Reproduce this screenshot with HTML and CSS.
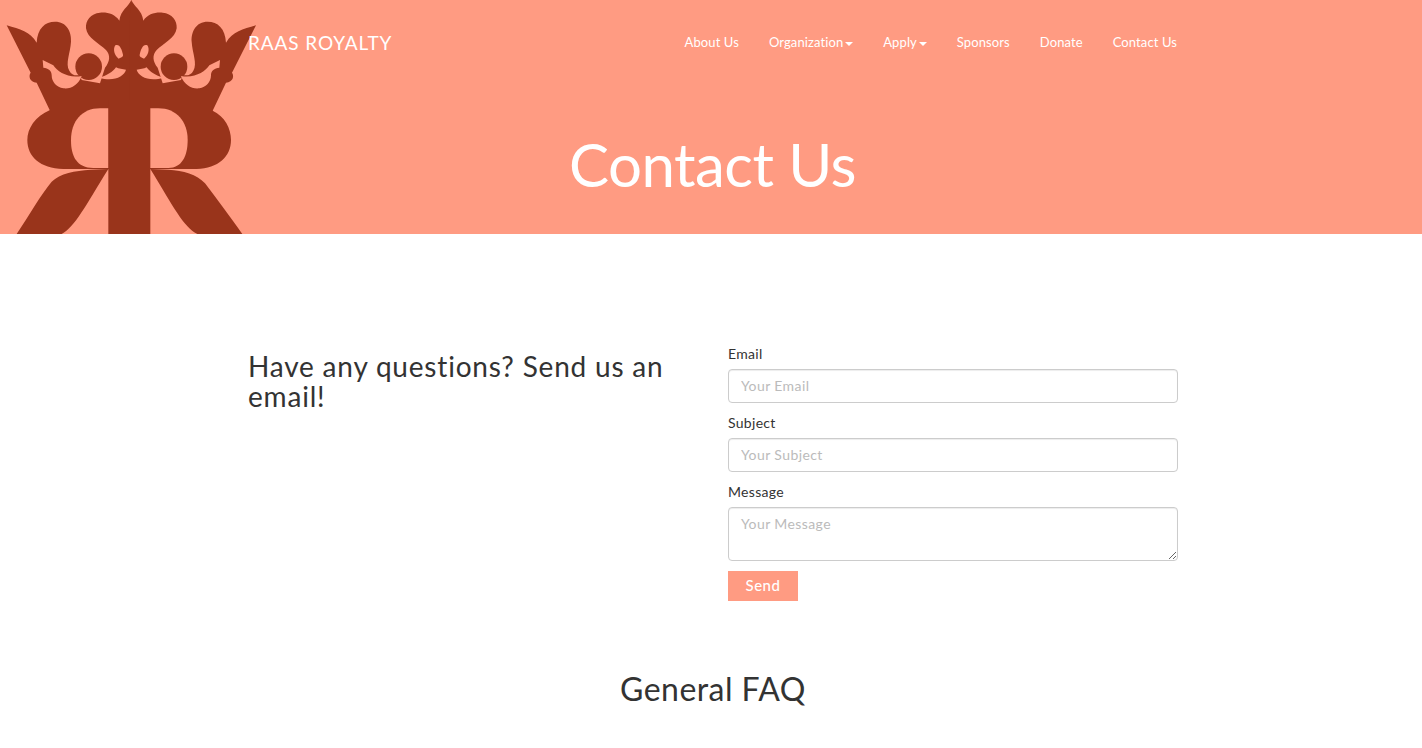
FILE: index.html
```html
<!DOCTYPE html>
<html lang="en">
<head>
    <meta charset="UTF-8">
    <meta name="viewport" content="width=device-width, initial-scale=1.0">
    <title>Contact Us - Raas Royalty</title>
    <link rel="stylesheet" href="styles.css">
</head>
<body>
    <header class="hero">
        <svg class="logo" viewBox="0 0 780 702" aria-hidden="true">
            <defs>
                <g id="crownHalf">
                    <path d="M394 0C386 20 362 30 358 62C345 42 322 36 300 38C272 40 256 62 258 85C262 115 298 130 318 150C332 165 330 185 315 203L300 250L245 240L240 225C225 228 215 225 208 212C195 190 211 160 213 125C215 95 200 65 165 65C135 65 112 85 110 128C90 95 60 88 20 76L92 218C85 228 88 245 110 248L150 332L150 345L400 345L400 60Z"/>
                    <circle cx="266" cy="200" r="40"/>
                    <path class="cut" d="M128 180L160 196C172 215 205 236 245 228C235 255 212 268 190 265C170 262 155 246 155 226C155 212 145 205 130 203Z"/>
                    <path class="cut" d="M298 233C322 226 338 216 348 202C356 206 368 208 378 209C372 230 340 246 298 233Z"/>
                    <path class="cut" d="M346 136C338 148 343 166 356 176C362 172 370 172 369 164C366 148 358 130 346 136Z"/>
                </g>
            </defs>
            <!-- R bowls go under the crown so the joins don't show -->
            <path d="M150 330C105 350 82 385 82 420C82 470 120 505 190 507L590 507C655 505 693 470 693 420C693 385 675 350 638 332L620 300L170 300Z"/>
            <use href="#crownHalf"/>
            <use href="#crownHalf" transform="matrix(-1 0 0 1 788 0)"/>
            <path class="cut" d="M326 325L300 325C245 325 213 365 213 420C213 470 230 503 280 504L326 504Z"/>
            <path class="cut" d="M450 325L475 325C530 325 563 365 563 420C563 470 545 503 505 504L450 504Z"/>
            <rect x="325" y="300" width="126" height="402"/>
            <path d="M272 509C225 512 180 520 155 545C125 580 85 650 50 702L185 702C225 680 255 620 325 507Z"/>
            <path d="M505 509C550 512 590 522 615 550C645 590 690 650 727 702L592 702C550 680 520 620 451 507Z"/>
        </svg>
        <nav class="navbar">
            <a class="brand" href="#">RAAS ROYALTY</a>
            <ul class="nav-links">
                <li><a href="#">About Us</a></li>
                <li><a href="#">Organization<span class="caret"></span></a></li>
                <li><a href="#">Apply<span class="caret"></span></a></li>
                <li><a href="#">Sponsors</a></li>
                <li><a href="#">Donate</a></li>
                <li><a href="#">Contact Us</a></li>
            </ul>
        </nav>
        <h1>Contact Us</h1>
    </header>

    <main class="container">
        <section class="contact-row">
            <h3 class="contact-title">Have any questions? Send us an email!</h3>
            <form class="contact-form">
                <label for="email">Email</label>
                <input type="text" id="email" placeholder="Your Email">
                <label for="subject">Subject</label>
                <input type="text" id="subject" placeholder="Your Subject">
                <label for="message">Message</label>
                <textarea id="message" placeholder="Your Message"></textarea>
                <button type="button">Send</button>
            </form>
        </section>
        <h2 class="faq-title">General FAQ</h2>
    </main>
</body>
</html>
```

FILE: styles.css
```css
body {
    font-family: "Lato", "Open Sans", sans-serif;
    margin: 0;
    height: 748px;
    overflow: hidden;
    background-color: white;
    color: #333;
}

.hero {
    position: relative;
    height: 234px;
    background-color: #ff9b82;
    color: white;
    overflow: hidden;
}

.logo {
    position: absolute;
    left: 0;
    top: 0;
    width: 260px;
    height: 234px;
    fill: #99341b;
}

.logo .cut {
    fill: #ff9b82;
}

.navbar {
    width: 930px;
    height: 81px;
    margin-left: 248px;
    display: flex;
    justify-content: space-between;
    align-items: center;
    position: relative;
}

.brand {
    padding-top: 4px;
    font-size: 19px;
    letter-spacing: .9px;
    color: white;
    text-decoration: none;
}

.nav-links {
    display: flex;
    gap: 30px;
    list-style: none;
    margin: 0 1px 0 0;
    padding: 0;
}

.nav-links a {
    font-size: 13px;
    letter-spacing: .1px;
    color: white;
    text-decoration: none;
}

.caret {
    display: inline-block;
    margin-left: 2px;
    vertical-align: middle;
    border-top: 4px solid white;
    border-left: 4px solid transparent;
    border-right: 4px solid transparent;
}

h1 {
    position: relative;
    margin: 20px 0 0 3px;
    font-size: 60px;
    font-weight: 400;
    letter-spacing: -.5px;
    line-height: 126px;
    text-align: center;
}

.container {
    width: 930px;
    margin-left: 248px;
}

.contact-row {
    display: flex;
    justify-content: space-between;
    padding-top: 110px;
}

.contact-title {
    width: 450px;
    margin: 7px 0 0;
    font-size: 28px;
    font-weight: 400;
    letter-spacing: .8px;
    line-height: 30px;
}

.contact-form {
    width: 450px;
    display: flex;
    flex-direction: column;
    align-items: flex-start;
}

.contact-form label {
    font-size: 14px;
    letter-spacing: .3px;
    line-height: 20px;
    margin-bottom: 5px;
}

.contact-form input,
.contact-form textarea {
    box-sizing: border-box;
    width: 100%;
    height: 34px;
    padding: 5px 12px 7px;
    margin-bottom: 10px;
    font-family: inherit;
    font-size: 14px;
    letter-spacing: .4px;
    color: #555;
    border: 1px solid #ccc;
    border-radius: 4px;
    box-shadow: inset 0 1px 1px rgba(0, 0, 0, .075);
    outline: none;
}

.contact-form textarea {
    height: 54px;
    padding-top: 7px;
}

.contact-form ::placeholder {
    color: #bbb;
}

.contact-form button {
    width: 70px;
    height: 30px;
    padding: 0 0 2px;
    font-family: inherit;
    font-size: 15px;
    font-weight: 500;
    letter-spacing: .5px;
    color: white;
    background-color: #ff9b82;
    border: none;
}

.faq-title {
    margin: 70px 0 0;
    font-size: 32px;
    font-weight: 400;
    letter-spacing: .45px;
    line-height: 36px;
    text-align: center;
}
```
